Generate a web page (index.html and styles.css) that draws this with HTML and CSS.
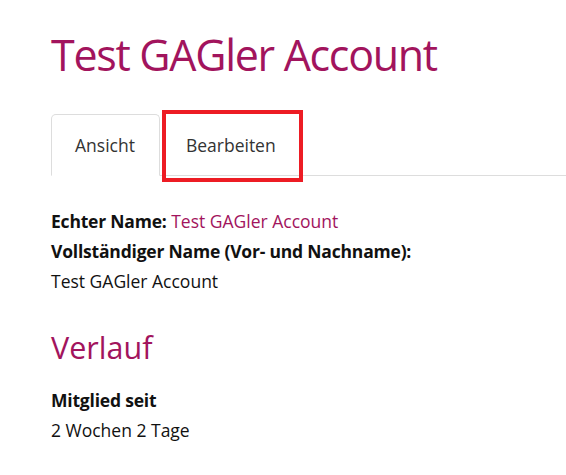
FILE: index.html
```html
<!DOCTYPE html>
<html lang="de">
<head>
    <meta charset="UTF-8">
    <meta name="viewport" content="width=device-width, initial-scale=1.0">
    <title>Test GAGler Account</title>
    <link rel="stylesheet" href="styles.css">
</head>
<body>
    <div class="page">
        <h1 class="page-title">Test GAGler Account</h1>
        <ul class="tabs">
            <li class="tab active"><a href="#">Ansicht</a></li>
            <li class="tab highlight"><a href="#">Bearbeiten</a></li>
        </ul>
        <div class="profile">
            <div class="field"><span class="label">Echter Name:</span> <a href="#" class="name-link">Test GAGler Account</a></div>
            <div class="field"><span class="label">Vollständiger Name (Vor- und Nachname):</span></div>
            <div class="field">Test GAGler Account</div>
        </div>
        <h2 class="section-title">Verlauf</h2>
        <div class="history">
            <div class="field"><span class="label">Mitglied seit</span></div>
            <div class="field">2 Wochen 2 Tage</div>
        </div>
    </div>
</body>
</html>
```

FILE: styles.css
```css
body {
    margin: 0;
    font-family: "Open Sans", "Noto Sans", sans-serif;
    color: #111;
    background: #fff;
}
.page {
    padding: 25px 0 0 51px;
}
.page-title {
    margin: 0;
    font-size: 43px;
    font-weight: 400;
    line-height: 60px;
    letter-spacing: -1.3px;
    color: #a2145d;
}
.tabs {
    display: flex;
    list-style: none;
    margin: 29px 0 0 0;
    padding: 0;
    border-bottom: 1px solid #ddd;
}
.tab {
    position: relative;
    margin-right: 2px;
}
.tab a {
    display: block;
    padding: 18px 24px 18px 23px;
    line-height: 24px;
    font-size: 17.5px;
    color: #333;
    text-decoration: none;
    border: 1px solid transparent;
    border-radius: 5px 5px 0 0;
    margin-bottom: -1px;
}
.tab.active a {
    border-color: #ddd;
    border-bottom-color: #fff;
    background: #fff;
}
/* Markierung um den Bearbeiten-Tab */
.tab.highlight::after {
    content: "";
    position: absolute;
    top: -4px;
    bottom: -7px;
    left: 0;
    right: -2px;
    border: 4px solid #ed1c24;
}
.profile {
    margin-top: 30px;
}
.field {
    font-size: 17.5px;
    line-height: 30px;
}
.label {
    font-weight: 700;
    letter-spacing: -0.2px;
}
.name-link {
    color: #a2145d;
    text-decoration: none;
}
.section-title {
    margin: 31px 0 0 0;
    font-size: 30.5px;
    font-weight: 400;
    line-height: 40px;
    color: #a2145d;
}
.history {
    margin-top: 18px;
}
```
